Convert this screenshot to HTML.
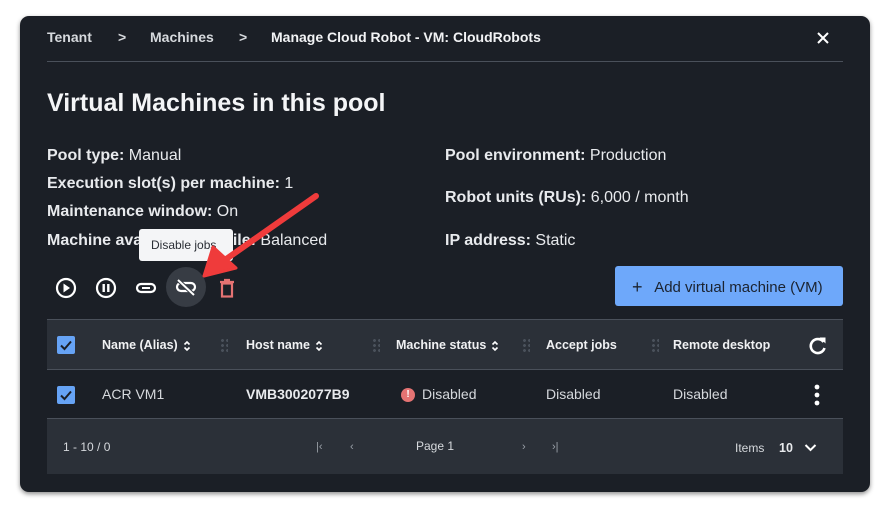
<!DOCTYPE html>
<html><head><meta charset="utf-8"><style>
*{margin:0;padding:0;box-sizing:border-box}
body{width:886px;height:505px;background:#fff;font-family:"Liberation Sans","Noto Sans CJK JP",sans-serif;color:#e8eaed;position:relative;overflow:hidden}
.a{position:absolute;white-space:nowrap}
.dlg{position:absolute;left:20px;top:16px;width:850px;height:476px;background:#1b1f26;border-radius:9px;box-shadow:0 2px 5px rgba(0,0,0,.45)}
.b{font-weight:bold}
.t15{font-size:16px}
.hdr{font-size:12.5px;font-weight:bold;color:#f0f1f3}
.dots{position:absolute;width:8px;height:14px;background-image:radial-gradient(circle,#4a515b 1.3px,transparent 1.6px);background-size:5px 5px}
.cb{position:absolute;width:18px;height:18px;background:#66a3f5;border-radius:2px}
.so{display:inline-block;vertical-align:middle;margin-left:5px}
</style></head><body>
<div class="dlg"></div>
<div class="a b" style="left:47px;top:29px;font-size:14px;color:#d6d9dd">Tenant</div>
<div class="a b" style="left:118px;top:29px;font-size:14px;color:#d6d9dd">&gt;</div>
<div class="a b" style="left:150px;top:29px;font-size:14px;color:#d6d9dd">Machines</div>
<div class="a b" style="left:239px;top:29px;font-size:14px;color:#d6d9dd">&gt;</div>
<div class="a b" style="left:271px;top:29px;font-size:14px;color:#f2f3f5">Manage Cloud Robot - VM: CloudRobots</div>
<svg class="a" style="left:817px;top:32px" width="12" height="12"><path d="M1 1L11 11M11 1L1 11" stroke="#fff" stroke-width="2"/></svg>
<div class="a" style="left:47px;top:61px;width:796px;height:1px;background:#4a505a"></div>
<div class="a b" style="left:47px;top:89px;font-size:25px;color:#f4f5f7">Virtual Machines in this pool</div>
<div class="a t15" style="left:47px;top:147px"><b>Pool type:</b> Manual</div>
<div class="a t15" style="left:47px;top:175px"><b>Execution slot(s) per machine:</b> 1</div>
<div class="a t15" style="left:47px;top:203px"><b>Maintenance window:</b> On</div>
<div class="a t15" style="left:47px;top:232px"><b>Machine availability profile:</b> Balanced</div>
<div class="a t15" style="left:445px;top:147px"><b>Pool environment:</b> Production</div>
<div class="a t15" style="left:445px;top:189px"><b>Robot units (RUs):</b> 6,000 / month</div>
<div class="a t15" style="left:445px;top:232px"><b>IP address:</b> Static</div>
<div class="a" style="left:139px;top:229px;width:94px;height:32px;background:#f4f5f7;border-radius:3px;color:#2b2f36;font-size:12px;padding:9px 0 0 12px">Disable jobs</div>
<svg class="a" style="left:54px;top:276px" width="24" height="24"><circle cx="12" cy="12" r="9" stroke="#fff" stroke-width="2.2" fill="none"/><path d="M9.5 7.5L16 12L9.5 16.5Z" fill="#fff"/></svg>
<svg class="a" style="left:94px;top:276px" width="24" height="24"><circle cx="12" cy="12" r="9" stroke="#fff" stroke-width="2.2" fill="none"/><rect x="8.5" y="8" width="2.4" height="8" fill="#fff"/><rect x="13.1" y="8" width="2.4" height="8" fill="#fff"/></svg>
<svg class="a" style="left:134px;top:276px" width="24" height="24"><rect x="3" y="8" width="18" height="8" rx="4" stroke="#fff" stroke-width="2.2" fill="none"/><rect x="9" y="10.5" width="6" height="3" fill="#1b1f26"/><rect x="8" y="11" width="8" height="2" fill="#fff"/></svg>
<div class="a" style="left:166px;top:267px;width:40px;height:40px;border-radius:50%;background:#373c44"></div>
<svg class="a" style="left:174px;top:275px" width="24" height="24"><rect x="3" y="8" width="18" height="8" rx="4" stroke="#fff" stroke-width="2.2" fill="none"/><path d="M4 5L20 20" stroke="#373c44" stroke-width="4"/><path d="M4 5L20 20" stroke="#fff" stroke-width="2"/></svg>
<svg class="a" style="left:216px;top:276px" width="22" height="24"><path d="M4 6H18M8 4h6" stroke="#e57373" stroke-width="2.2"/><rect x="6" y="7.5" width="10" height="13" stroke="#e57373" stroke-width="2.2" fill="none"/></svg>
<svg class="a" style="left:0;top:0" width="886" height="505"><path d="M316 196L222 262" stroke="#ef3b3b" stroke-width="6" stroke-linecap="round"/><path d="M204 276L213 247L236 268Z" fill="#ef3b3b" stroke="#ef3b3b" stroke-width="3" stroke-linejoin="round"/></svg>
<div class="a" style="left:615px;top:266px;width:228px;height:40px;background:#6ea8fa;border-radius:3px;color:#1b2330;font-size:15px;padding:10px 0 0 17px"><span style="font-size:18px;position:relative;top:1px">+</span>&nbsp;&nbsp; Add virtual machine (VM)</div>
<div class="a" style="left:47px;top:319px;width:796px;height:51px;background:#2b3038;border-top:1px solid #4a505a;border-bottom:1px solid #4a505a"></div>
<div class="cb" style="left:57px;top:336px"></div>
<svg class="a" style="left:57px;top:336px" width="18" height="18"><path d="M4 9.5L7.5 13L14 5.5" stroke="#1b1f26" stroke-width="2" fill="none"/></svg>
<div class="a hdr" style="left:102px;top:338px">Name (Alias)<svg class="so" width="8" height="12"><path d="M1.5 4.5L4 2L6.5 4.5M1.5 7.5L4 10L6.5 7.5" stroke="#fff" stroke-width="1.6" fill="none"/></svg></div>
<div class="dots" style="left:220px;top:338px"></div>
<div class="a hdr" style="left:246px;top:338px">Host name<svg class="so" width="8" height="12"><path d="M1.5 4.5L4 2L6.5 4.5M1.5 7.5L4 10L6.5 7.5" stroke="#fff" stroke-width="1.6" fill="none"/></svg></div>
<div class="dots" style="left:372px;top:338px"></div>
<div class="a hdr" style="left:396px;top:338px">Machine status<svg class="so" width="8" height="12"><path d="M1.5 4.5L4 2L6.5 4.5M1.5 7.5L4 10L6.5 7.5" stroke="#fff" stroke-width="1.6" fill="none"/></svg></div>
<div class="dots" style="left:522px;top:338px"></div>
<div class="a hdr" style="left:546px;top:338px">Accept jobs</div>
<div class="dots" style="left:651px;top:338px"></div>
<div class="a hdr" style="left:673px;top:338px">Remote desktop</div>
<svg class="a" style="left:808px;top:335px" width="20" height="20"><path d="M15.5 7A7 7 0 1 0 16.5 13" stroke="#fff" stroke-width="2.6" fill="none"/><path d="M11.5 2.5H17.5V8.5Z" fill="#fff"/></svg>
<div class="a" style="left:47px;top:418px;width:796px;height:1px;background:#4a505a"></div>
<div class="cb" style="left:57px;top:386px"></div>
<svg class="a" style="left:57px;top:386px" width="18" height="18"><path d="M4 9.5L7.5 13L14 5.5" stroke="#1b1f26" stroke-width="2" fill="none"/></svg>
<div class="a" style="left:102px;top:386px;font-size:14px;color:#d6d9dd">ACR VM1</div>
<div class="a b" style="left:246px;top:386px;font-size:14px">VMB3002077B9</div>
<div class="a" style="left:401px;top:388px;width:14px;height:14px;border-radius:50%;background:#e57373;color:#fff;font-size:10px;font-weight:bold;text-align:center;line-height:14px">!</div>
<div class="a" style="left:422px;top:386px;font-size:14px;color:#d6d9dd">Disabled</div>
<div class="a" style="left:546px;top:386px;font-size:14px;color:#d6d9dd">Disabled</div>
<div class="a" style="left:673px;top:386px;font-size:14px;color:#d6d9dd">Disabled</div>
<svg class="a" style="left:813px;top:384px" width="8" height="22"><circle cx="4" cy="3" r="2.4" fill="#fff"/><circle cx="4" cy="11" r="2.4" fill="#fff"/><circle cx="4" cy="19" r="2.4" fill="#fff"/></svg>
<div class="a" style="left:47px;top:419px;width:796px;height:55px;background:#2b3038"></div>
<div class="a" style="left:63px;top:440px;font-size:12px;color:#d6d9dd">1 - 10 / 0</div>
<div class="a" style="left:316px;top:441px;font-size:11px;color:#9aa0a8">|‹</div>
<div class="a" style="left:350px;top:441px;font-size:11px;color:#9aa0a8">‹</div>
<div class="a" style="left:416px;top:439px;font-size:12px;color:#d6d9dd">Page 1</div>
<div class="a" style="left:522px;top:441px;font-size:11px;color:#9aa0a8">›</div>
<div class="a" style="left:552px;top:441px;font-size:11px;color:#9aa0a8">›|</div>
<div class="a" style="left:735px;top:441px;font-size:12px;color:#d6d9dd">Items</div>
<div class="a b" style="left:779px;top:441px;font-size:12.5px">10</div>
<svg class="a" style="left:804px;top:443px" width="13" height="10"><path d="M1.5 2L6.5 7L11.5 2" stroke="#fff" stroke-width="2" fill="none"/></svg>
</body></html>
